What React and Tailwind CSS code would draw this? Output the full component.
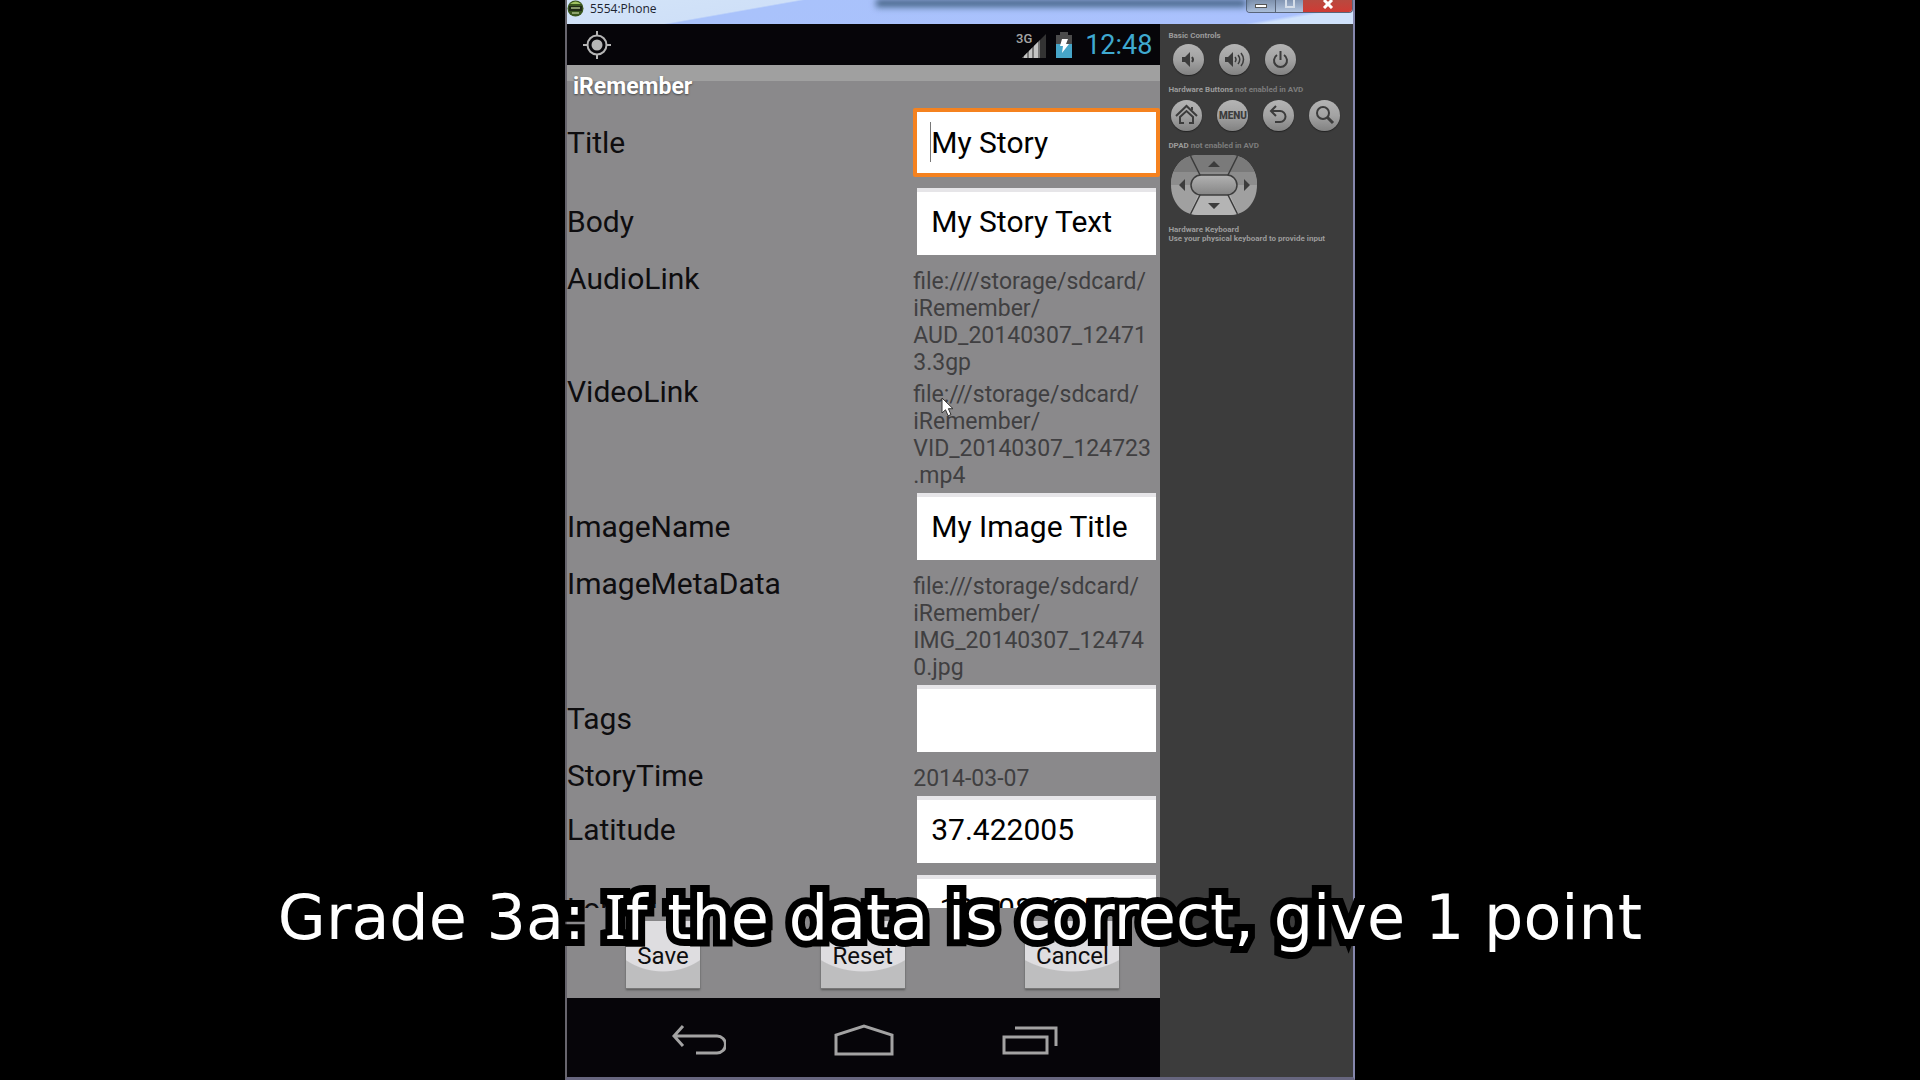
import React from "react";

const rows = [
  { id: "title", label: "Title", value: "My Story", focused: true },
  { id: "body", label: "Body", value: "My Story Text" },
  {
    id: "audio",
    label: "AudioLink",
    lines: ["file:////storage/sdcard/", "iRemember/", "AUD_20140307_12471", "3.3gp"],
  },
  {
    id: "video",
    label: "VideoLink",
    lines: ["file:///storage/sdcard/", "iRemember/", "VID_20140307_124723", ".mp4"],
    pointer: true,
  },
  { id: "imageName", label: "ImageName", value: "My Image Title" },
  {
    id: "imageMeta",
    label: "ImageMetaData",
    lines: ["file:///storage/sdcard/", "iRemember/", "IMG_20140307_12474", "0.jpg"],
  },
  { id: "tags", label: "Tags", value: "" },
  { id: "time", label: "StoryTime", lines: ["2014-03-07"] },
  { id: "lat", label: "Latitude", value: "37.422005" },
  { id: "lng", label: "Longitude", value: "-122.084095" },
];

function Pointer() {
  return (
    <svg className="absolute left-7 top-[21px]" width="14" height="20" viewBox="0 0 14 20" aria-hidden="true">
      <path d="M1 1v15l3.5-3.2 2.6 6 2.9-1.2-2.6-5.9H12z" fill="#fff" stroke="#333" strokeWidth="1" />
    </svg>
  );
}

function Row({ row }) {
  if (row.lines) {
    return (
      <div className="grid grid-cols-[346fr_247fr]">
        <span className="text-[30px] leading-8">{row.label}</span>
        <p className="relative min-w-0 pt-[5px] text-[23px] leading-[27px] text-[#403f41]">
          {row.lines.map((line) => (
            <span key={line} className="block whitespace-nowrap">
              {line}
            </span>
          ))}
          {row.pointer && <Pointer />}
        </p>
      </div>
    );
  }
  if (row.focused) {
    return (
      <div className="grid grid-cols-[346fr_247fr] items-center pb-[7px] pt-[3px]">
        <label htmlFor={row.id} className="text-[30px] leading-8">
          {row.label}
        </label>
        <span className="relative block">
          <input
            id={row.id}
            defaultValue={row.value}
            className="block h-[69px] w-full rounded-xs border-4 border-[#f5821f] bg-white px-3.5 text-[30px] text-black outline-none"
          />
          <span className="absolute left-[17px] top-3.5 h-10 w-px bg-[#777]" />
        </span>
      </div>
    );
  }
  return (
    <div className="grid grid-cols-[346fr_247fr] items-center pb-2 pt-1">
      <label htmlFor={row.id} className="text-[30px] leading-8">
        {row.label}
      </label>
      <span className="block px-1">
        <input
          id={row.id}
          defaultValue={row.value}
          className="block h-[67px] w-full border-t-4 border-[#e6e5e8] bg-white px-3.5 pb-1 text-[30px] text-black outline-none"
        />
      </span>
    </div>
  );
}

function Signal() {
  return (
    <svg width="31" height="28" viewBox="0 0 31 28" aria-label="3G signal">
      <text x="0" y="12" fontSize="13" fontWeight="500" fontFamily="Roboto, sans-serif" fill="#a5a5a5">3G</text>
      <path d="M6 27L30 3v24z" fill="#333" />
      <path d="M6 27L24 9v18z" fill="#777" />
      <path d="M8 25v2h3v-5zM13 20v7h3V17zM18 15v12h4V11z" fill="#c4c4c4" />
    </svg>
  );
}

function Battery() {
  return (
    <svg width="18" height="26" viewBox="0 0 18 26" aria-label="Battery charging">
      <path d="M5 0h8v3h4v9H1V3h4z" fill="#4b4b4b" />
      <path d="M1 12h16v14H1z" fill="#46a5c8" />
      <path d="M7 7h6l-2 5h3l-7 9 1-7H5z" fill="#fff" />
    </svg>
  );
}

function Round({ label, children }) {
  return (
    <button
      type="button"
      aria-label={label}
      className="flex size-[31px] items-center justify-center rounded-full bg-linear-to-b from-[#b4b4b4] via-[#a3a3a3] to-[#828282] font-[Roboto,sans-serif] text-[10px] font-black text-[#3c3c3c] shadow-[0_1px_1px_#222]"
    >
      {children}
    </button>
  );
}

function Glyph({ children }) {
  return (
    <svg width="23" height="23" viewBox="0 0 23 23" fill="none" stroke="#3c3c3c" strokeWidth="2" aria-hidden="true">
      {children}
    </svg>
  );
}

function Dpad() {
  return (
    <svg className="mt-[5px] ml-[11px] block" width="86" height="61" viewBox="0 0 86 61" role="img" aria-label="DPAD">
      <defs>
        <clipPath id="pad">
          <path d="M27 0H59C76 0 86 14 86 30S76 60 59 60H27C10 60 0 46 0 30S10 0 27 0z" />
        </clipPath>
        <linearGradient id="knob" x1="0" y1="0" x2="0" y2="1">
          <stop offset="0" stopColor="#b2b2b2" />
          <stop offset="1" stopColor="#858585" />
        </linearGradient>
      </defs>
      <g clipPath="url(#pad)">
        <path d="M0 0H86V60H0z" fill="#a0a0a0" />
        <path d="M0 0H86V17H0z" fill="#7a7a7a" />
        <path d="M0 17H86V30H0z" fill="#8d8d8d" />
        <path d="M27 40H59L68 60H18z" fill="#b4b4b4" />
        <path d="M19 0L30 22M67 0L56 22M19 60L30 38M67 60L56 38" stroke="#3c3c3c" strokeWidth="1.5" />
      </g>
      <rect x="20" y="20" width="46" height="20" rx="10" fill="url(#knob)" stroke="#3c3c3c" strokeWidth="1.5" />
      <path d="M37 12l6-6 6 6zM37 48l6 6 6-6zM14 24l-6 6 6 6zM73 24l6 6-6 6z" fill="#3c3c3c" />
    </svg>
  );
}

function Controls() {
  return (
    <aside className="flex flex-1 flex-col bg-[#3c3c3c] pt-[7px] font-[Roboto,sans-serif] text-[8px] font-bold leading-[9px] text-[#9b9b9b]">
      <p className="pl-2">Basic Controls</p>
      <div className="mt-1 flex gap-[15px] pl-[13px]">
        <Round label="Volume down">
          <Glyph>
            <path d="M5 9h3l5-5v15l-5-5H5z" fill="#3c3c3c" stroke="none" />
            <path d="M15 9q2 2.5 0 5" />
          </Glyph>
        </Round>
        <Round label="Volume up">
          <Glyph>
            <path d="M2 9h3l5-5v15l-5-5H2z" fill="#3c3c3c" stroke="none" />
            <path d="M12 9q2 2.5 0 5M15 7q3.5 4.5 0 9M18 5q5 6.5 0 13" strokeWidth="1.5" />
          </Glyph>
        </Round>
        <Round label="Power">
          <Glyph>
            <path d="M8 7a6.5 6.5 0 1 0 7 0M11.5 3v9" />
          </Glyph>
        </Round>
      </div>
      <p className="mt-2.5 pl-2">
        Hardware Buttons <span className="text-[#7d7d7d]">not enabled in AVD</span>
      </p>
      <div className="mt-1.5 flex gap-[15px] pl-[11px]">
        <Round label="Home">
          <Glyph>
            <path d="M1 12L11.5 2 22 12M17 6V3M9 19H5v-6l6.5-6 6.5 6v6h-4" />
          </Glyph>
        </Round>
        <Round label="Menu">
          <span>MENU</span>
        </Round>
        <Round label="Back">
          <Glyph>
            <path d="M9 2L4 7l5 5M4 7h9a5.5 5.5 0 0 1 0 11H8" />
          </Glyph>
        </Round>
        <Round label="Search">
          <Glyph>
            <circle cx="10" cy="9" r="6" />
            <path d="M14 13l6 6" strokeWidth="3" />
          </Glyph>
        </Round>
      </div>
      <p className="mt-2.5 pl-2">
        DPAD <span className="text-[#7d7d7d]">not enabled in AVD</span>
      </p>
      <Dpad />
      <p className="mt-[9px] pl-2">
        Hardware Keyboard
        <br />
        Use your physical keyboard to provide input
      </p>
    </aside>
  );
}

function SoftButton({ children, width }) {
  return (
    <button
      type="button"
      className={
        width +
        " flex h-[68px] items-center justify-center border-b border-[#777] bg-[radial-gradient(80%_76%_at_50%_0%,#dedde0_98%,#bebebf_100%)] pt-[3px] text-2xl shadow-[0_1px_2px_#555]"
      }
    >
      {children}
    </button>
  );
}

function Navigation() {
  return (
    <nav className="flex h-[79px] items-center justify-between bg-[#060509] pl-[105px] pr-[101px] pt-1">
      <button type="button" aria-label="Back">
        <svg width="54" height="32" viewBox="0 0 54 32" fill="none" stroke="#a3a3a3" strokeWidth="3">
          <path d="M11 2L2 12l9 10M2 12h43a8 8 0 0 1 0 17H24" />
        </svg>
      </button>
      <button type="button" aria-label="Home">
        <svg width="60" height="32" viewBox="0 0 60 32" fill="none" stroke="#a3a3a3" strokeWidth="3">
          <path d="M2 30V11L30 2l28 9v19z" />
        </svg>
      </button>
      <button type="button" aria-label="Recent apps">
        <svg width="57" height="32" viewBox="0 0 57 32" fill="none" stroke="#a3a3a3" strokeWidth="3">
          <path d="M2 13h43v16H2zM13 4h41v18" />
        </svg>
      </button>
    </nav>
  );
}

export default function App() {
  return (
    <div className="relative flex h-screen justify-center overflow-hidden bg-black">
      <main className="flex w-full max-w-[790px] flex-col border-x-2 border-b-3 border-l-[#67656d] border-r-[#8587ad] border-b-[#67667f]">
        <header className="flex h-6 shrink-0 items-start justify-between bg-[linear-gradient(170deg,#d3e4f8_0%,#cfe0f8_25%,#a9c2fb_26%,#aac1fd_88%,#d0e2fb_90%)]">
          <div className="flex items-center gap-1.5">
            <svg width="17" height="17" viewBox="0 0 17 17" aria-hidden="true">
              <circle cx="8.5" cy="8.5" r="8" fill="#39561d" />
              <path d="M3 4q5.5-5 11 0z" fill="#9fc262" />
              <path d="M2 6h13v5H2z" fill="#202b17" />
              <path d="M4 8h9M5 13h7" stroke="#a9bd88" strokeWidth="1.5" />
            </svg>
            <h1 className="font-['Open_Sans',sans-serif] text-xs leading-4 text-[#1c2430]">5554:Phone</h1>
          </div>
          <div className="ml-auto h-2 w-[370px] bg-linear-to-b from-[#1d3a55] to-[#7798c4] blur-[3px]" />
          <div className="flex h-[13px] overflow-hidden rounded-b border border-t-0 border-[#59657a]">
            <button type="button" aria-label="Minimize" className="flex w-[29px] items-center justify-center border-r border-[#59657a] bg-linear-to-b from-[#7e91ad] to-[#aabdd8]">
              <span className="h-1 w-3 border border-[#555] bg-white" />
            </button>
            <button type="button" aria-label="Maximize" className="flex w-[27px] items-start justify-center bg-linear-to-b from-[#8396b3] to-[#b3c5df]">
              <span className="h-2 w-2.5 border-2 border-t-0 border-[#d6dee9]" />
            </button>
            <button type="button" aria-label="Close" className="flex w-[49px] items-start justify-center bg-linear-to-b from-[#b8493f] to-[#cf3a34]">
              <svg width="12" height="9" viewBox="0 0 12 9" aria-hidden="true">
                <path d="M2 0l8 8M10 0L2 8" stroke="#fff" strokeWidth="3" />
              </svg>
            </button>
          </div>
        </header>

        <div className="flex min-h-0 flex-1">
          <section className="flex w-[75.5%] shrink-0 flex-col bg-[#8a898b] font-[Roboto,sans-serif] text-[#0e0d0f]">
            <div className="flex h-[41px] shrink-0 items-center bg-[#060509] pl-4 pr-2">
              <svg width="28" height="28" viewBox="0 0 28 28" fill="none" stroke="#b5b5b5" strokeWidth="2" aria-label="Location">
                <circle cx="14" cy="14" r="9.5" />
                <circle cx="14" cy="14" r="5.5" fill="#b5b5b5" stroke="none" />
                <path d="M14 0v5M14 23v5M0 14h5M23 14h5" />
              </svg>
              <span className="ml-auto mr-2">
                <Signal />
              </span>
              <Battery />
              <time className="ml-3 text-[27px] leading-8 text-[#3fa9d0]">12:48</time>
            </div>
            <h2 className="h-10 shrink-0 bg-[linear-gradient(#a0a0a0_16px,#8a898b_16px)] pl-1.5 pt-[9px] text-[23px] font-bold leading-[26px] text-white [text-shadow:0_1px_2px_#444]">
              iRemember
            </h2>
            <form className="min-h-0 flex-1 overflow-hidden">
              {rows.map((row) => (
                <Row key={row.id} row={row} />
              ))}
            </form>
            <div className="flex h-[90px] shrink-0 items-start justify-between pl-[59px] pr-[41px] pt-[13px]">
              <SoftButton width="w-[74px]">Save</SoftButton>
              <SoftButton width="w-[84px]">Reset</SoftButton>
              <SoftButton width="w-[94px]">Cancel</SoftButton>
            </div>
            <Navigation />
          </section>
          <Controls />
        </div>
      </main>

      <p className="pointer-events-none absolute inset-x-0 bottom-[122px] whitespace-nowrap text-center font-['DejaVu_Sans',sans-serif] text-[62px] leading-[80px] text-white [-webkit-text-stroke:14px_#000] [paint-order:stroke_fill] [stroke-linejoin:round]">
        Grade 3a: <span className="font-['Noto_Sans',sans-serif] leading-none">I</span>f the data is correct, give 1 point
      </p>
    </div>
  );
}
